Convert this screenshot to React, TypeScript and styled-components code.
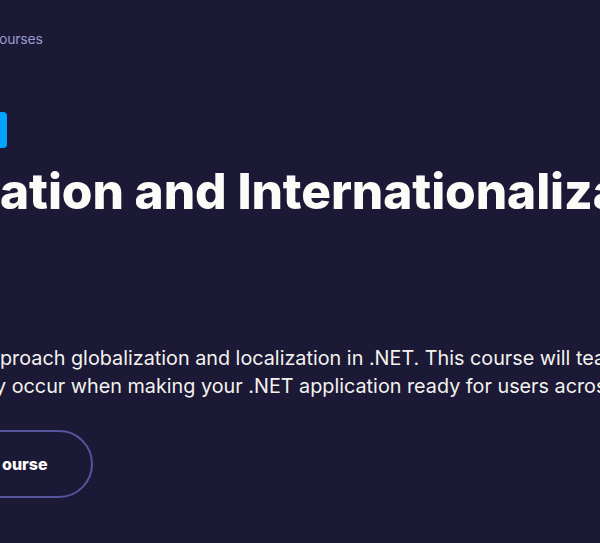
import React from "react";
import styled, { createGlobalStyle } from "styled-components";

const Global = createGlobalStyle`
  html, body {
    margin: 0;
    padding: 0;
    background: #1b1935;
    overflow: hidden;
  }
  body {
    font-family: Inter, "Noto Sans", sans-serif;
  }
`;

const Hero = styled.section`
  width: 600px;
  height: 543px;
  overflow: hidden;
  background: #1b1935;
  padding-top: 29px;
  box-sizing: border-box;
  display: flex;
  flex-direction: column;
  align-items: flex-start;
`;

const Crumb = styled.div`
  font-size: 14px;
  line-height: 20px;
  color: #9c99d2;
  white-space: nowrap;
  margin-left: -1px;
  letter-spacing: -0.2px;
`;

const Badge = styled.div`
  margin-top: 63px;
  margin-left: -40px;
  width: 47px;
  height: 36px;
  border-radius: 4px;
  background: #00a3ff;
`;

const Title = styled.h1`
  margin: 13px 0 0 0;
  font-size: 49.6px;
  line-height: 60px;
  font-weight: 800;
  color: #fdfbf8;
  white-space: nowrap;
  letter-spacing: -0.1px;
`;

const Description = styled.p`
  margin: 123px 0 0 0;
  font-size: 19.8px;
  line-height: 28px;
  color: #f4f2ef;
  white-space: nowrap;
`;

const Line = styled.span<{ $shift?: number }>`
  display: block;
  margin-left: ${(p) => p.$shift ?? 0}px;
`;

const CourseButton = styled.button`
  margin-top: 30px;
  margin-left: -80px;
  height: 68px;
  padding: 0 43px 0 80px;
  border: 2px solid #57549e;
  border-radius: 34px;
  background: transparent;
  color: #ffffff;
  font-family: Inter, "Noto Sans", sans-serif;
  font-size: 16px;
  font-weight: 800;
  cursor: pointer;
`;

export default function App() {
  return (
    <>
      <Global />
      <Hero>
        <Crumb>ourses</Crumb>
        <Badge />
        <Title>ation and Internationalization in .NET</Title>
        <Description>
          <Line>proach globalization and localization in .NET. This course will teach you the</Line>
          <Line $shift={-5}>y occur when making your .NET application ready for users across the globe.</Line>
        </Description>
        <CourseButton>ourse</CourseButton>
      </Hero>
    </>
  );
}
